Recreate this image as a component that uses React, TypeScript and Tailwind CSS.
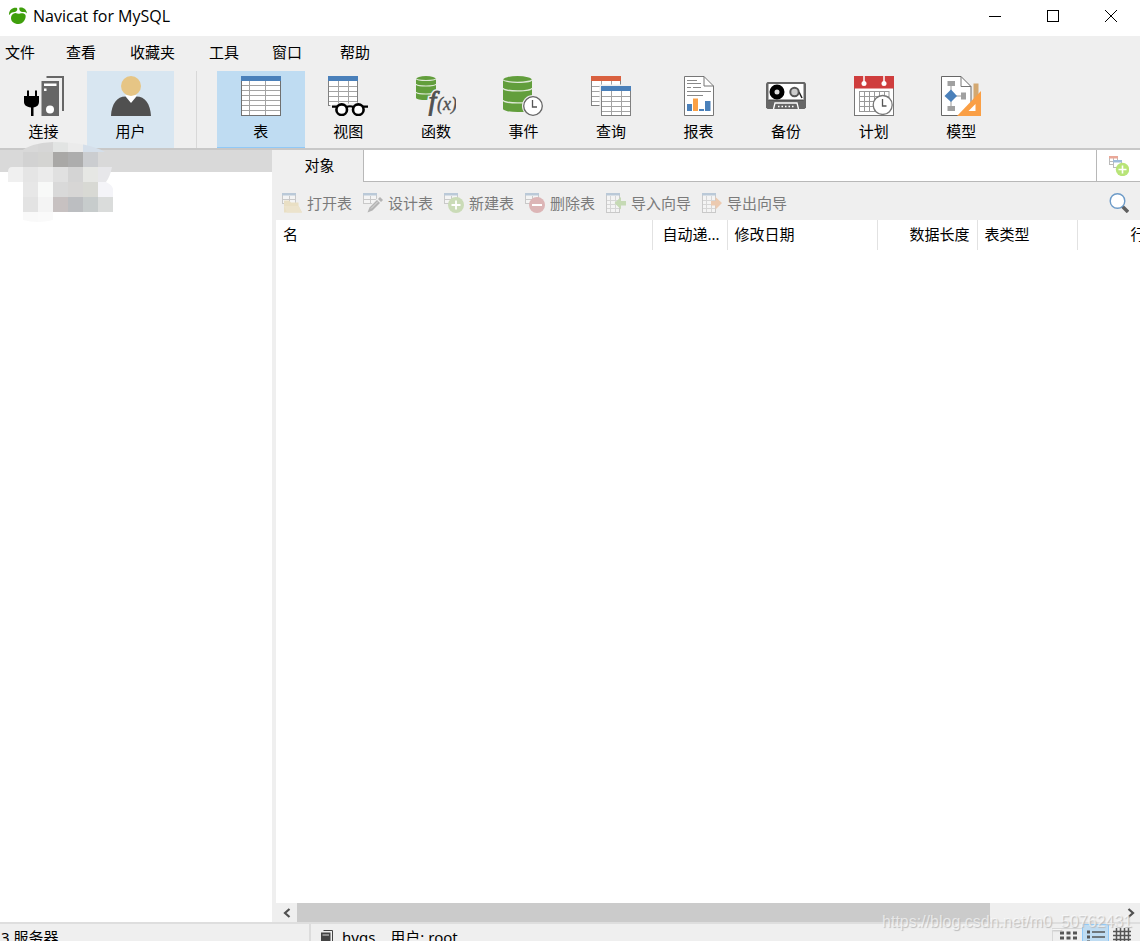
import type { ReactNode } from "react";

type IconProps = { children: ReactNode };

function Big({ children }: IconProps) {
  return (
    <svg className="h-10 w-10" viewBox="0 0 40 40" fill="none" aria-hidden="true">
      {children}
    </svg>
  );
}

function Small({ children }: IconProps) {
  return (
    <svg className="h-5 w-5 flex-none" viewBox="0 0 20 20" fill="none" aria-hidden="true">
      {children}
    </svg>
  );
}

function Sheet({ x = 0, y = 0, head }: { x?: number; y?: number; head: string }) {
  return (
    <g transform={`translate(${x} ${y})`}>
      <rect width="30" height="30" fill="#fff" />
      <path d="M1 10.5H29M1 15.5H29M1 20.5H29M1 25.5H29M10.5 5V29M20.5 5V29" stroke="#a3a3a3" />
      <rect x=".5" y=".5" width="29" height="29" stroke="#808080" />
      <rect width="30" height="5" fill={head} />
    </g>
  );
}

function Cylinder({ w, h }: { w: number; h: number }) {
  const r = w / 10;
  const gap = h / 3;
  return (
    <g>
      <path
        d={`M0 ${r + 1}A${w / 2} ${r + 1} 0 0 1 ${w} ${r + 1}V${h - r}A${w / 2} ${r} 0 0 1 0 ${h - r}Z`}
        fill="#629e3c"
      />
      <path
        d={`M0 ${r + 0.5}A${w / 2} ${r} 0 0 0 ${w} ${r + 0.5}M0 ${gap}A${w / 2} ${r} 0 0 0 ${w} ${gap}M0 ${gap * 2}A${w / 2} ${r} 0 0 0 ${w} ${gap * 2}`}
        stroke="#dfe9d8"
        strokeWidth="1.2"
      />
    </g>
  );
}

function Clock({ x, y }: { x: number; y: number }) {
  return (
    <g transform={`translate(${x} ${y})`}>
      <circle r="11" fill="#efefef" />
      <circle r="9.3" fill="#fff" stroke="#666" strokeWidth="1.3" />
      <path d="M-.5 -6V1H4" stroke="#555" strokeWidth="1.3" />
    </g>
  );
}

const connectionIcon = (
  <Big>
    <path d="M3 14.5h2V20h6v-5.500h2V20h2v6c0 3-2 5-5.500 5.500V40h-2.500v-8.500C2.500 31 0 29 0 26v-6h3z" fill="#000" />
    <path d="M22.500 1H39V35" stroke="#666" strokeWidth="2" />
    <rect x="17.500" y="5" width="17.500" height="35" fill="#666" />
    <rect x="20" y="7.500" width="12.500" height="2.500" fill="#fff" />
    <rect x="20" y="12.500" width="2.500" height="2.500" fill="#fff" />
    <circle cx="26" cy="33.500" r="4" fill="#fff" />
  </Big>
);

const userIcon = (
  <Big>
    <path d="M14 19L20 27.500L26 19Z" fill="#fff" />
    <circle cx="20" cy="10" r="10" fill="#e6c585" />
    <path d="M0 40C.5 28 6 20.500 14.500 20.500L20 27L25.500 20.500C34 20.500 39.500 28 40 40Z" fill="#505050" />
  </Big>
);

const tableIcon = (
  <Big>
    <rect width="40" height="40" fill="#fff" />
    <path d="M1 9.500H39M1 14.500H39M1 19.500H39M1 24.500H39M1 29.500H39M1 34.500H39M8.500 5V39M24.500 5V39" stroke="#a3a3a3" />
    <rect x=".5" y=".5" width="39" height="39" stroke="#707070" />
    <rect width="40" height="5" fill="#4a80ba" />
  </Big>
);

const viewIcon = (
  <Big>
    <Sheet head="#4a80ba" />
    <path d="M2 31V29.500L8 27.500H21L30 26.500V40H2Z" fill="#efefef" />
    <g stroke="#000">
      <path d="M4 30.700H10M34 30.700H40M18 31.500Q22 29 26 31.500" strokeWidth="2.200" />
      <circle cx="13.700" cy="33.700" r="5.300" fill="#fff" strokeWidth="2.600" />
      <circle cx="30.300" cy="33.700" r="5.300" fill="#fff" strokeWidth="2.600" />
    </g>
  </Big>
);

const functionIcon = (
  <Big>
    <Cylinder w={20} h={24} />
    <g fontFamily="Liberation Serif, serif" fontStyle="italic" fill="#505050">
      <text x="12.500" y="34" fontSize="28" stroke="#efefef" strokeWidth="4">f</text>
      <text x="12.500" y="34" fontSize="28" stroke="#505050" strokeWidth=".9">f</text>
      <text x="21" y="34" fontSize="18" stroke="#505050" strokeWidth=".4">(x)</text>
    </g>
  </Big>
);

const eventIcon = (
  <Big>
    <Cylinder w={29} h={36} />
    <Clock x={30} y={30} />
  </Big>
);

const queryIcon = (
  <Big>
    <Sheet head="#d9603f" />
    <rect x="8.500" y="8.500" width="31.500" height="31.500" fill="#efefef" />
    <Sheet x={10} y={10} head="#4a80ba" />
  </Big>
);

const reportIcon = (
  <Big>
    <path d="M5.500 .5H25L34.500 10V39.500H5.500Z" fill="#fff" stroke="#777" />
    <path d="M25 .5V10H34.500" stroke="#777" />
    <path d="M8 4.500H18M8 7.500H22M8 11.500H12M14 11.500H22M8 15.500H32M8 19.500H24" stroke="#888" />
    <path d="M8 28h5v7H8zM20 33h5v2h-5zM26 25h5.500v10H26z" fill="#4a80ba" />
    <path d="M14 22.500h5V35h-5z" fill="#faa045" />
  </Big>
);

const backupIcon = (
  <Big>
    <path d="M1.500 6H38.500L40 7.500V31.500L38.500 33H1.500L0 31.500V7.500Z" fill="#666" />
    <path d="M2.500 8H37.500V24H2.500Z" fill="#fff" />
    <path d="M2.500 23.500H37.500V25H2.500Z" fill="#555" />
    <circle cx="11" cy="16" r="5" stroke="#000" strokeWidth="5" fill="#ddd" />
    <path d="M33 16L36 22" stroke="#222" strokeWidth="1.500" />
    <circle cx="28.500" cy="16" r="4.200" stroke="#555" strokeWidth="2" fill="#ccc" />
    <path d="M7.500 33L9 27H31L32.500 33" stroke="#fff" strokeWidth="1.300" />
    <path d="M12 30.500H28" stroke="#fff" strokeWidth="1.300" strokeDasharray="1.500 2" />
  </Big>
);

const planIcon = (
  <Big>
    <rect x=".5" y=".5" width="39" height="39" fill="#fff" stroke="#777" />
    <rect width="40" height="12.500" fill="#cf3d3d" />
    <path d="M10 0V7M30 0V7" stroke="#fff" strokeWidth="1.500" />
    <circle cx="10" cy="7.500" r="2.500" fill="#fff" />
    <circle cx="30" cy="7.500" r="2.500" fill="#fff" />
    <path d="M5.500 15.500H35M5.500 20.500H35M5.500 25.500H35M5.500 30.500H35M5.500 35.500H35M5.500 15V36M10.500 15V36M15.500 15V36M20.500 15V36M25.500 15V36M30.500 15V36M35 15V36" stroke="#999" />
    <circle cx="28.700" cy="29" r="9.500" fill="#fff" stroke="#777" strokeWidth="1.300" />
    <path d="M28.500 23V30H32.500" stroke="#555" strokeWidth="1.300" />
  </Big>
);

const modelIcon = (
  <Big>
    <path d="M.5 .5H20L30 10.500V39.500H.5Z" fill="#fff" stroke="#666" />
    <path d="M20 .5V10.500H30" stroke="#777" />
    <path d="M10 7V33M10 20H22" stroke="#999" />
    <path d="M6.500 5h7.500v5H6.500zM6.500 30h7.500v5H6.500zM20 16.500h5v7h-5z" fill="#a0a0a0" />
    <path d="M10 13.500L16 20L10 26L3.500 20Z" fill="#4a80ba" />
    <rect x="32.500" y="7.500" width="5" height="24" fill="#d3a871" />
    <path d="M40 15V40H16Z" fill="#fa9f45" />
    <path d="M34.500 28V35H27.500Z" fill="#fff" />
  </Big>
);

function FadedSheet() {
  return (
    <g>
      <rect x=".5" y=".5" width="13" height="10" fill="#f4f4f4" stroke="#c9c9c9" />
      <path d="M1 6.500H13M7.500 3V10" stroke="#c9c9c9" />
      <rect width="14" height="2.500" fill="#bac9d8" />
    </g>
  );
}

function FadedTall() {
  return (
    <g>
      <rect x=".5" y=".5" width="13" height="19" fill="#f4f4f4" stroke="#c9c9c9" />
      <path d="M1 7.500H13M1 11.500H13M1 15.500H13M4.500 3V19M9.500 3V19" stroke="#d6d6d6" />
      <rect width="14" height="2.500" fill="#bac9d8" />
    </g>
  );
}

const actions = [
  {
    label: "打开表",
    icon: (
      <Small>
        <FadedSheet />
        <path d="M2 19.500V7.500H7L9 9.500H16.500V12.500L20 19.500Z" fill="#e9dfc4" />
        <path d="M2 13H16.500L20 19.500H5Z" fill="#ece3cc" />
      </Small>
    ),
  },
  {
    label: "设计表",
    icon: (
      <Small>
        <FadedSheet />
        <path d="M3.500 20L5.500 14L15.500 4L20 8.500L9.500 18Z" fill="#efefef" />
        <path d="M4.500 19.500L6.500 14.500L14 7L17 10L9.500 17.500Z" fill="#b4b4b4" />
        <path d="M15 6L17 4L20 7L18 9Z" fill="#b4b4b4" />
        <path d="M8 15.500L15 8.500" stroke="#ddd" />
      </Small>
    ),
  },
  {
    label: "新建表",
    icon: (
      <Small>
        <FadedSheet />
        <circle cx="12" cy="12" r="8" fill="#cadbb7" />
        <path d="M12 7.500V16.500M7.500 12H16.500" stroke="#fff" strokeWidth="1.800" />
      </Small>
    ),
  },
  {
    label: "删除表",
    icon: (
      <Small>
        <FadedSheet />
        <circle cx="12" cy="12" r="8" fill="#dcb5b6" />
        <path d="M7 12H17" stroke="#fff" strokeWidth="2" />
      </Small>
    ),
  },
  {
    label: "导入向导",
    icon: (
      <Small>
        <FadedTall />
        <path d="M8.500 10L15 4V8H20V12.500H15V16.500Z" fill="#c6dab5" />
      </Small>
    ),
  },
  {
    label: "导出向导",
    icon: (
      <Small>
        <FadedTall />
        <path d="M20 10L13.500 4V8H9V12.500H13.500V16.500Z" fill="#eccab0" />
      </Small>
    ),
  },
];

const views = [
  { label: "表", icon: tableIcon, active: true },
  { label: "视图", icon: viewIcon },
  { label: "函数", icon: functionIcon },
  { label: "事件", icon: eventIcon },
  { label: "查询", icon: queryIcon },
  { label: "报表", icon: reportIcon },
  { label: "备份", icon: backupIcon },
  { label: "计划", icon: planIcon },
  { label: "模型", icon: modelIcon },
];

const mosaic: [number, number, string][] = [
  [15, 0, "#d8d8d8"], [30, 0, "#d6d6d6"], [45, 0, "#e2e4e3"], [60, 0, "#ebebeb"], [75, 0, "#d5dfea"], [90, 0, "#d5dfea"],
  [15, 10, "#d2d2d2"], [30, 10, "#d4d4d2"], [45, 10, "#a9a8a6"], [60, 10, "#adadad"], [75, 10, "#cbcdd0"], [90, 10, "#d9d9d9"],
  [0, 25, "#f0f0f0"], [15, 25, "#e5e5e5"], [30, 25, "#ebebeb"], [45, 25, "#e0e0e0"], [60, 25, "#d4d4d4"], [75, 25, "#e6e7e4"], [90, 25, "#e7e7ea"],
  [15, 40, "#e7e7e7"], [30, 40, "#f8f9f8"], [45, 40, "#d9d9d9"], [60, 40, "#d7d6d5"], [75, 40, "#d8d9d4"], [90, 40, "#f4f4f8"],
  [15, 55, "#e3e3e3"], [30, 55, "#f4f4f4"], [45, 55, "#c7c1c1"], [60, 55, "#bcbec1"], [75, 55, "#c7cccc"], [90, 55, "#dadcdb"],
  [15, 70, "#f9f9f9"], [30, 70, "#fafafa"],
];

function ToolButton({ label, icon, tone }: { label: string; icon: ReactNode; tone: string }) {
  return (
    <button className={`flex h-[77px] flex-col items-center gap-[5px] pt-[5px] leading-5 ${tone}`}>
      {icon}
      {label}
    </button>
  );
}

const cell = "border-r border-[#e2e2e2] px-[7px] pb-0.5 font-normal whitespace-nowrap";

export default function App() {
  return (
    <div className="relative flex h-screen flex-col overflow-hidden bg-[#efefef] font-['Noto_Sans','Noto_Sans_CJK_SC',sans-serif] text-[15px] leading-5 text-black">
      <header className="flex h-9 flex-none items-center bg-white pb-1 pl-[9px]">
        <svg className="h-[18px] w-[18px]" viewBox="0 0 18 18" aria-hidden="true">
          <path d="M2 11C2 8 4 6.300 6.500 6C8 6.500 9.500 7 11 6.500C13 5.800 15.500 6 16.500 8C17.500 12 14 17 9.500 17C5 17 2 14.500 2 11Z" fill="#3f9f0c" />
          <path d="M0 8C-.3 3.500 3 .3 7.500 .8C8.600 1.300 8.500 3 7.500 4C6.500 5.200 4.500 5 3 5.600C1.700 6.200 1 7.500 0 8ZM10.300 .8C14 -.2 17.500 2 18 6.500C16.800 5.200 15.500 4.800 13.500 5C11.500 5 10 3.200 10.300 .8Z" fill="#3f9f0c" />
        </svg>
        <h1 className="ml-1.5 font-['Open_Sans',sans-serif] text-base leading-5">Navicat for MySQL</h1>
        <div className="ml-auto flex h-full">
          <button aria-label="最小化" className="flex w-[58px] items-center justify-center">
            <svg className="h-3 w-3" viewBox="0 0 12 12"><path d="M0 6.500H12" stroke="#000" /></svg>
          </button>
          <button aria-label="最大化" className="flex w-[58px] items-center justify-center">
            <svg className="h-3 w-3" viewBox="0 0 12 12"><rect x=".5" y=".5" width="11" height="11" fill="none" stroke="#000" /></svg>
          </button>
          <button aria-label="关闭" className="flex w-[58px] items-center justify-center">
            <svg className="h-3 w-3" viewBox="0 0 12 12"><path d="M0 0L12 12M12 0L0 12" stroke="#000" /></svg>
          </button>
        </div>
      </header>

      <nav className="grid h-[35px] flex-none grid-cols-[61px_64px_79px_63px_68px_auto] items-center justify-start pb-[3px] pl-[5px]">
        {["文件", "查看", "收藏夹", "工具", "窗口", "帮助"].map((m) => (
          <button key={m} className="text-left">{m}</button>
        ))}
      </nav>

      <div className="flex h-[79px] flex-none border-b-2 border-[#c8c8c8]">
        <div className="grid w-[174px] grid-cols-2">
          <ToolButton label="连接" icon={connectionIcon} tone="" />
          <ToolButton label="用户" icon={userIcon} tone="bg-[#d8e6f1]" />
        </div>
        <div className="mr-5 ml-[22px] w-px bg-[#d8d8d8]" />
        <div className="grid w-[788px] grid-cols-9">
          {views.map((v) => (
            <ToolButton
              key={v.label}
              label={v.label}
              icon={v.icon}
              tone={v.active ? "bg-[#bfdcf2] border-b border-[#91c9f7]" : ""}
            />
          ))}
        </div>
      </div>

      <main className="flex min-h-0 flex-1">
        <aside className="w-[272px] flex-none bg-white">
          <div className="h-[22px] bg-[#d9d9d9]" />
        </aside>

        <section className="flex min-w-0 flex-1 flex-col">
          <div className="flex h-8 flex-none">
            <button className="w-[92px] border-r border-[#b8b8b8] pb-0.5 pl-1">对象</button>
            <div className="flex-1 border-b border-[#b8b8b8] bg-white" />
            <button aria-label="新建查询" className="flex w-11 items-center justify-center border-b border-l border-[#b8b8b8] bg-white">
              <Small>
                <rect x=".5" y=".5" width="8" height="8" fill="#fff" stroke="#bbb" />
                <path d="M1 5.500H8M4.500 2V8" stroke="#bbb" />
                <rect width="9" height="2.500" fill="#eaa898" />
                <rect x="4.500" y="4.500" width="8" height="7" fill="#fff" stroke="#bbb" />
                <rect x="4" y="4" width="9" height="2.500" fill="#9dbcdb" />
                <circle cx="13.500" cy="13.500" r="6.700" fill="#b8e478" />
                <path d="M13.500 9.500V17.500M9.500 13.500H17.500" stroke="#fff" strokeWidth="1.600" />
              </Small>
            </button>
          </div>

          <div className="flex h-[38px] flex-none items-center gap-[11px] pt-1 pr-[11px] pl-[10px]">
            {actions.map((a) => (
              <button key={a.label} disabled className="flex items-center gap-[5px] text-[#7b7b7b]">
                {a.icon}
                {a.label}
              </button>
            ))}
            <button aria-label="搜索" className="ml-auto">
              <Small>
                <path d="M13 13L19 19" stroke="#606060" strokeWidth="3.500" />
                <circle cx="8.500" cy="8" r="7.300" fill="#fff" stroke="#6d9bc8" strokeWidth="1.400" />
              </Small>
            </button>
          </div>

          <div className="ml-1 min-h-0 flex-1 overflow-hidden bg-white">
            <table className="w-[1028px] table-fixed border-collapse">
              <colgroup>
                <col className="w-[376px]" />
                <col className="w-[75px]" />
                <col className="w-[150px]" />
                <col className="w-[100px]" />
                <col className="w-[100px]" />
                <col className="w-[76px]" />
                <col />
              </colgroup>
              <thead>
                <tr className="h-[30px]">
                  <th className={`${cell} text-left`}>名</th>
                  <th className={`${cell} text-right`}>自动递...</th>
                  <th className={`${cell} text-left`}>修改日期</th>
                  <th className={`${cell} text-right`}>数据长度</th>
                  <th className={`${cell} text-left`}>表类型</th>
                  <th className={`${cell} text-right`}>行</th>
                  <th />
                </tr>
              </thead>
            </table>
          </div>

          <div className="ml-1 flex h-[19px] flex-none">
            <button aria-label="向左滚动" className="flex w-[21px] items-center justify-center">
              <svg className="h-2.5 w-2.5" viewBox="0 0 10 10"><path d="M7.500 1L3 5L7.500 9" fill="none" stroke="#505050" strokeWidth="2.200" /></svg>
            </button>
            <div className="flex-1">
              <div className="h-full w-[84%] bg-[#cbcbcb]" />
            </div>
            <button aria-label="向右滚动" className="flex w-[18px] items-center justify-center">
              <svg className="h-2.5 w-2.5" viewBox="0 0 10 10"><path d="M2.500 1L7 5L2.500 9" fill="none" stroke="#505050" strokeWidth="2.200" /></svg>
            </button>
          </div>
        </section>
      </main>

      <footer className="flex h-[19px] flex-none items-start overflow-hidden border-t-2 border-[#dedede]">
        <div className="flex h-[26px] w-[311px] items-center border-r-2 border-[#dcdcdc] pl-px">3 服务器</div>
        <div className="flex h-[26px] items-center pl-2.5">
          <svg className="h-[15px] w-3" viewBox="0 0 12 15" aria-hidden="true">
            <path d="M2.500 .5H11.500V12.500" fill="none" stroke="#444" />
            <rect y="2.500" width="9.500" height="12.500" fill="#444" />
            <path d="M1.500 5H8" stroke="#ddd" />
          </svg>
          <span className="ml-[9px]">hyqs</span>
          <span className="ml-[15px]">用户: root</span>
        </div>
        <div className="ml-auto flex h-7 pr-1.5">
          <button aria-label="列表" className="mt-1 flex w-[30px] justify-center border-t border-l border-[#d8d8d8] pt-0.5">
            <svg className="h-4 w-[18px]" viewBox="0 0 18 16"><path d="M1 2H18M1 7H18M1 12H18" stroke="#555" strokeWidth="3" strokeDasharray="4 2.500" /></svg>
          </button>
          <button aria-label="详细信息" className="flex w-[27px] justify-center border border-[#91c9f7] bg-[#bfdcf2] pt-[5px]">
            <svg className="h-4 w-[18px]" viewBox="0 0 18 16"><path d="M0 2H3M0 7H3M0 12H3" stroke="#555" strokeWidth="3" /><path d="M5 2H18M5 7H18M5 12H18" stroke="#555" strokeWidth="1.500" /></svg>
          </button>
          <button aria-label="ER 图表" className="flex w-[25px] justify-center pt-[3px]">
            <svg className="h-[18px] w-[18px]" viewBox="0 0 18 18"><path d="M0 4.500H18M0 8.500H18M0 12.500H18M3.500 1V18M7.500 1V18M11.500 1V18M15.500 1V18" stroke="#555" strokeWidth="1.500" /></svg>
          </button>
        </div>
      </footer>

      <svg className="pointer-events-none absolute top-[142px] left-2 h-20 w-[105px]" viewBox="0 0 105 80" aria-hidden="true">
        <defs>
          <clipPath id="smudge">
            <path d="M12 10Q22 1 45 0Q80 0 97 10V25H104Q102 35 98 40Q105 43 105 48V70H45V78Q30 82 15 78V40H0V30Q0 25 4 25H12Z" />
          </clipPath>
        </defs>
        <g clipPath="url(#smudge)" shapeRendering="crispEdges">
          {mosaic.map(([x, y, c]) => (
            <rect key={`${x}-${y}`} x={x} y={y} width="15" height="15" fill={c} />
          ))}
        </g>
      </svg>

      <p className="pointer-events-none absolute right-2 bottom-[9px] font-['Liberation_Sans',sans-serif] text-base leading-5 text-white/60 [text-shadow:1px_1px_1px_#bbbbbb]">
        https://blog.csdn.net/m0_50762431
      </p>
    </div>
  );
}
